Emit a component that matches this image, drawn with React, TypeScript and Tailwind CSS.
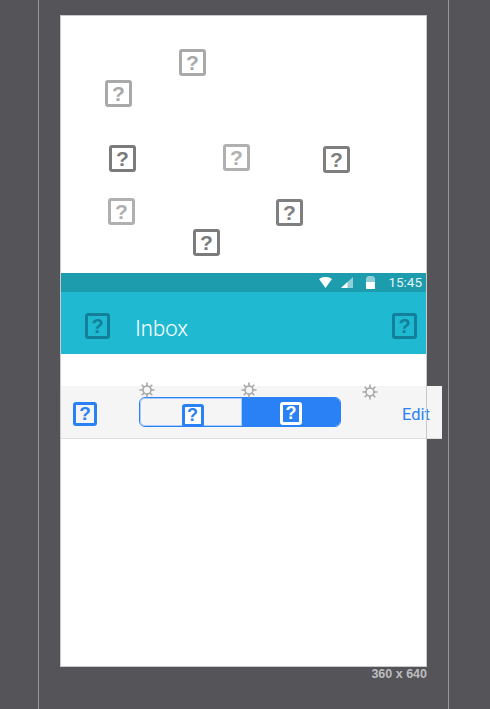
const scattered = [
    { left: 'left-[118px]', top: 'top-[33px]', color: 'border-[#a9a9a9] text-[#a9a9a9]' },
    { left: 'left-[44px]', top: 'top-[64px]', color: 'border-[#a9a9a9] text-[#a9a9a9]' },
    { left: 'left-[48px]', top: 'top-[129px]', color: 'border-[#7b7b7b] text-[#7b7b7b]' },
    { left: 'left-[162px]', top: 'top-[128px]', color: 'border-[#b0b0b0] text-[#b0b0b0]' },
    { left: 'left-[262px]', top: 'top-[130px]', color: 'border-[#7f7f7f] text-[#7f7f7f]' },
    { left: 'left-[47px]', top: 'top-[182px]', color: 'border-[#b0b0b0] text-[#b0b0b0]' },
    { left: 'left-[215px]', top: 'top-[183px]', color: 'border-[#7f7f7f] text-[#7f7f7f]' },
    { left: 'left-[132px]', top: 'top-[213px]', color: 'border-[#7b7b7b] text-[#7b7b7b]' },
];

function Missing({ className }: { className: string }) {
    return (
        <span
            className={`flex items-center justify-center rounded-[3px] border-[3px] font-bold font-['Liberation_Sans',sans-serif] leading-none ${className}`}
        >
            ?
        </span>
    );
}

function Gear({ className }: { className: string }) {
    return (
        <svg viewBox="0 0 16 16" className={`absolute h-[16px] w-[16px] ${className}`} fill="none" stroke="#a8a8a8" strokeWidth="1.6">
            <circle cx="8" cy="8" r="4" />
            <path d="M8 .5v3.5M8 12v3.5M.5 8H4M12 8h3.5M2.7 2.7l2.5 2.5M10.8 10.8l2.5 2.5M2.7 13.3l2.5-2.5M10.8 5.2l2.5-2.5" />
        </svg>
    );
}

export default function App() {
    return (
        <div className="relative h-[709px] w-[490px] overflow-hidden bg-[#555459]">
            {/* Guides */}
            <div className="absolute left-[38px] top-0 h-full w-px bg-[#98979b]" />
            <div className="absolute left-[448px] top-0 h-full w-px bg-[#98979b]" />

            <div className="relative ml-[60px] mt-[15px] h-[652px] w-[367px] bg-white p-px">
                {/* Scattered icons */}
                <div className="relative h-[257px]">
                    {scattered.map((s, i) => (
                        <Missing key={i} className={`absolute h-[27px] w-[27px] text-[21px] ${s.left} ${s.top} ${s.color}`} />
                    ))}
                </div>

                {/* Status bar */}
                <div className="flex h-[19px] items-center justify-end bg-[#1c9cad] pr-[4px] text-white">
                    <svg viewBox="0 0 13 11" className="mr-[9px] h-[11px] w-[13px]">
                        <path d="M0 2C3.8-.7 9.2-.7 13 2L6.5 11z" fill="#fff" />
                    </svg>
                    <svg viewBox="0 0 12 11" className="mr-[13px] h-[11px] w-[12px]">
                        <path d="M0 11L12 0v11z" fill="#8fd0d8" />
                        <path d="M0 11L6.5 5v6z" fill="#fff" />
                    </svg>
                    <svg viewBox="0 0 9 13" className="mr-[13px] h-[13px] w-[9px]">
                        <path d="M0 2L2 0h5l2 2v4H0z" fill="#8fd0d8" />
                        <rect x="0" y="6" width="9" height="7" fill="#fff" />
                    </svg>
                    <span className="font-['Roboto',sans-serif] text-[13.5px] text-[#e4f4f6]">15:45</span>
                </div>

                {/* Toolbar */}
                <div className="flex h-[62px] items-center justify-between bg-[#1fbad1] pl-[24px] pr-[9px] pt-[5px]">
                    <div className="flex items-center">
                        <Missing className="h-[26px] w-[25px] text-[20px] border-[#12809a] text-[#12809a]" />
                        <span className="ml-[25px] mt-[6px] font-['Roboto',sans-serif] text-[22px] font-light text-white">Inbox</span>
                    </div>
                    <Missing className="h-[26px] w-[25px] text-[20px] border-[#12809a] text-[#12809a]" />
                </div>

                <div className="h-[32px]" />

                {/* Nav bar, runs past the artboard edge */}
                <div className="relative flex h-[53px] w-[381px] items-center border-b border-[#dedede] bg-[#f5f5f5] pl-[12px]">
                    <Missing className="mt-[3px] h-[24px] w-[24px] text-[19px] border-[#2a80f5] text-[#2a80f5]" />
                    <div className="mb-[1px] ml-[42px] flex h-[30px] w-[202px] overflow-hidden rounded-[6px] border border-[#2a80f5]">
                        <div className="flex w-[102px] flex-none items-end justify-center rounded-l-[5px] pl-[3px] shadow-[inset_0_0_0_1px_#a8ccfb]">
                            <Missing className="mb-[-1px] h-[23px] w-[22px] text-[18px] bg-white border-[#2a80f5] text-[#2a80f5]" />
                        </div>
                        <div className="flex flex-1 items-center justify-center bg-[#2a80f5] pt-[3px]">
                            <Missing className="h-[23px] w-[22px] text-[18px] border-white text-white" />
                        </div>
                    </div>
                    <span className="ml-[61px] mt-[7px] font-['Roboto',sans-serif] text-[16.5px] text-[#2a80f5]">Edit</span>
                    <Gear className="left-[78px] top-[-4px]" />
                    <Gear className="left-[180px] top-[-4px]" />
                    <Gear className="left-[301px] top-[-2px]" />
                </div>

                {/* Artboard edge sits on top of the overflow */}
                <div className="pointer-events-none absolute inset-0 border border-[#c9c9cb]" />
            </div>

            <div className="mr-[63px] text-right font-['Liberation_Sans',sans-serif] text-[12.5px] font-bold leading-[14px] text-[#bdbdbf]">
                360 x 640
            </div>
        </div>
    );
}
